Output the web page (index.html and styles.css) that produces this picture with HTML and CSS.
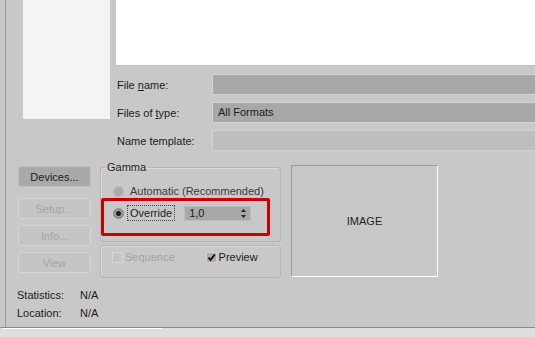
FILE: index.html
```html
<!DOCTYPE html>
<html>
<head>
  <title>Select Background Image</title>
  <link rel="stylesheet" href="styles.css">
</head>
<body>
  <div class="dialog">
    <div class="browse">
      <div class="places"></div>
      <div class="files">
        <div class="file-list"></div>
        <div class="fields">
          <label>File <u>n</u>ame:</label>
          <div class="field"></div>
          <label>Files of <u>t</u>ype:</label>
          <div class="field">All Formats</div>
          <label>Name template:</label>
          <div class="field disabled"></div>
        </div>
      </div>
    </div>

    <div class="options">
      <div class="buttons">
        <button class="btn devices">Devices...</button>
        <button class="btn" disabled>Setup...</button>
        <button class="btn" disabled>Info...</button>
        <button class="btn" disabled>View</button>
      </div>

      <div class="groups">
        <fieldset class="group gamma">
          <legend>Gamma</legend>
          <div class="gamma-body">
            <div class="choice">
              <span class="radio"></span>
              <span>Automatic (Recommended)</span>
            </div>
            <div class="choice">
              <span class="radio checked"></span>
              <span class="focus">Override</span>
              <div class="spinner">
                <span>1,0</span>
                <svg width="5" height="9" viewBox="0 0 5 9">
                  <path d="M2.5 0 L5 3 L0 3 Z M0 6 L5 6 L2.5 9 Z" fill="#222"/>
                </svg>
              </div>
            </div>
          </div>
          <div class="highlight"></div>
        </fieldset>

        <div class="group sequence">
          <div class="check disabled">
            <span class="box"></span>
            <span>Sequence</span>
          </div>
          <div class="check">
            <span class="box checked">
              <svg width="9" height="9" viewBox="0 0 9 9">
                <path d="M1.5 4.5 L3.5 7 L7.8 1.5" fill="none" stroke="#111" stroke-width="2"/>
              </svg>
            </span>
            <span>Preview</span>
          </div>
        </div>
      </div>

      <div class="image-box">IMAGE</div>
    </div>

    <div class="stats">
      <span>Statistics:</span><span>N/A</span>
      <span>Location:</span><span>N/A</span>
    </div>
  </div>
  <div class="status-bar">
    <div class="status-left"></div>
  </div>
</body>
</html>
```

FILE: styles.css
```css
body {
  margin: 0;
  background-color: #c8c8c8;
  font-family: "Liberation Sans", Arial, sans-serif;
  font-size: 11px;
  color: #1c1c1c;
  overflow: hidden;
}

.dialog {
  height: 327px;
  margin-left: 5px;
  border-left: 1px solid #9e9e9e;
  box-sizing: border-box;
}

/* file browser part */

.browse {
  display: flex;
  height: 152px;
}

.places {
  width: 87px;
  height: 119px;
  margin-left: 17px;
  background-color: #f4f4f4;
}

.files {
  flex: 1;
}

.file-list {
  height: 65px;
  margin-left: 6px;
  background-color: #ffffff;
  border-bottom: 1px solid #bcbcbc;
}

.fields {
  display: grid;
  grid-template-columns: 102px 1fr;
  grid-template-rows: 21px 21px 21px;
  row-gap: 7px;
  margin-top: 8px;
  align-items: center;
}

.fields label {
  padding-left: 7px;
}

.field {
  height: 21px;
  box-sizing: border-box;
  background-color: #a8a8a8;
  border: 1px solid #d3d3d3;
  border-right: none;
  padding-left: 5px;
  line-height: 19px;
}

.field.disabled {
  background-color: #bebebe;
}

/* options part */

.options {
  display: flex;
  margin-top: 9px;
  padding-left: 12px;
}

.buttons {
  display: flex;
  flex-direction: column;
  gap: 6px;
  width: 73px;
  padding-top: 5px;
}

.btn {
  height: 21px;
  padding: 0;
  font-family: inherit;
  font-size: 11px;
  color: #a6a6a6;
  background-color: #c5c5c5;
  border: 1px solid #d5d5d5;
  border-radius: 3px;
}

.btn.devices {
  color: #1c1c1c;
  background-color: #a9a9a9;
  border-color: #bdbdbd;
  margin-bottom: 5px;
}

.groups {
  display: flex;
  flex-direction: column;
  width: 181px;
  margin-left: 9px;
  gap: 3px;
}

.group {
  border: 1px solid #b5b5b5;
  border-radius: 3px;
  box-shadow: inset 1px 1px 0 #d9d9d9;
}

.gamma {
  position: relative;
  height: 81px;
  margin: 0;
  padding: 0 0 0 4px;
  box-sizing: border-box;
  min-width: 0;
}

.gamma legend {
  padding: 0 2px;
  line-height: 13px;
}

.gamma-body {
  display: flex;
  flex-direction: column;
  gap: 8px;
  padding: 11px 0 0 8px;
}

.choice {
  display: flex;
  align-items: center;
  color: #3a3a3a;
}

.radio {
  width: 11px;
  height: 11px;
  box-sizing: border-box;
  border-radius: 50%;
  background-color: #ababab;
  border: 1px solid #b9b9b9;
  margin-right: 6px;
}

.radio.checked {
  background-color: #9c9c9c;
  border-color: #8e8e8e;
  box-shadow: inset 0 0 0 2px #9c9c9c, inset 0 0 0 5px #1e1e1e;
}

.focus {
  border: 1px dotted #4a4a4a;
  padding: 1px 2px;
  margin-left: -3px;
  color: #1c1c1c;
}

.spinner {
  display: flex;
  align-items: center;
  justify-content: space-between;
  width: 67px;
  height: 15px;
  box-sizing: border-box;
  margin-left: 9px;
  padding: 0 4px 0 4px;
  background-color: #a8a8a8;
  border: 1px solid #bcbcbc;
  color: #1c1c1c;
}

.highlight {
  position: absolute;
  left: 0;
  top: 24px;
  width: 169px;
  height: 38px;
  box-sizing: border-box;
  border: 3px solid #c80000;
  border-radius: 2px;
}

.sequence {
  display: flex;
  align-items: flex-start;
  height: 33px;
  box-sizing: border-box;
  padding: 5px 0 0 11px;
  gap: 31px;
}

.check {
  display: flex;
  align-items: center;
  gap: 2px;
}

.check.disabled {
  color: #a4a4a4;
}

.box {
  display: flex;
  align-items: center;
  justify-content: center;
  width: 11px;
  height: 11px;
  box-sizing: border-box;
  background-color: #c5c5c5;
  border: 1px solid #d6d6d6;
}

.box.checked {
  background-color: #adadad;
  border-color: #d0d0d0;
}

.image-box {
  display: flex;
  align-items: center;
  justify-content: center;
  width: 147px;
  height: 112px;
  box-sizing: border-box;
  margin-left: 10px;
  margin-top: 4px;
  border: 1px solid #ffffff;
  border-top-color: #9c9c9c;
  border-left-color: #9c9c9c;
  color: #222;
}

/* statistics */

.stats {
  display: grid;
  grid-template-columns: 63px auto;
  line-height: 18px;
  margin-top: 8px;
  padding-left: 11px;
}

.status-bar {
  height: 10px;
  border-top: 1px solid #8c8c8c;
  background-color: #dedede;
}

.status-left {
  width: 159px;
  margin-left: 3px;
  height: 1px;
  background-color: #ffffff;
}
```
